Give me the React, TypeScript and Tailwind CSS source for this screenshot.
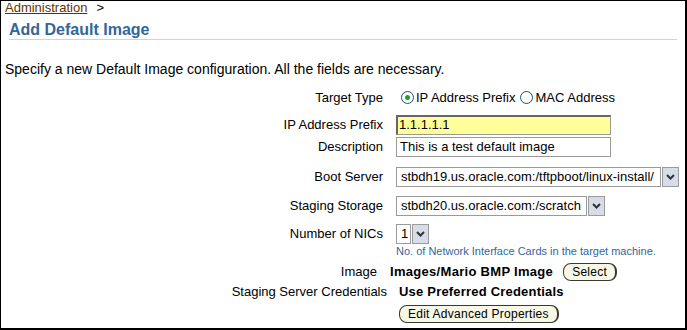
const font = { fontFamily: '"Liberation Sans", Arial, sans-serif' };

function Chevron() {
  return (
    <svg width="9" height="6" viewBox="0 0 9 6">
      <path d="M1 1 L4.5 4.5 L8 1" fill="none" stroke="#333" strokeWidth="2" />
    </svg>
  );
}

function Select({ value, width }: { value: string; width: string }) {
  return (
    <div className={`flex h-[20px] items-stretch ${width}`}>
      <div className="flex flex-1 items-center border border-[#9a9a9a] bg-white pl-[4px] text-[13px] text-black whitespace-nowrap overflow-hidden">
        {value}
      </div>
      <div className="ml-[1px] flex w-[17px] items-center justify-center border border-[#9a9a9a] bg-[#d8dbe8]">
        <Chevron />
      </div>
    </div>
  );
}

function Radio({ checked }: { checked?: boolean }) {
  return (
    <span className="inline-flex h-[13px] w-[13px] items-center justify-center rounded-full border border-[#1c5180] bg-white">
      {checked && <span className="h-[5px] w-[5px] rounded-full bg-[#21a121]" />}
    </span>
  );
}

function Button({ children }: { children: string }) {
  return (
    <button className="h-[18px] rounded-[8px] border border-[#3b3b2c] border-r-2 bg-[#f7f7e7] px-[8px] text-[12px] leading-[16px] tracking-[0.25px] text-black">
      {children}
    </button>
  );
}

export default function App() {
  return (
    <div
      className="h-[330px] w-[687px] overflow-hidden border-t border-l border-r-2 border-b-2 border-black bg-white text-black"
      style={font}
    >
      {/* breadcrumb */}
      <div className="pl-[4px] text-[13px] leading-[13px]">
        <a className="text-[#663300] underline">Administration</a>
        <span className="ml-[9px]">&gt;</span>
      </div>

      {/* title */}
      <div className="mx-[8px] mt-[6px] border-b border-[#d8d8a8] text-[16px] font-bold leading-[19px] text-[#336699]">
        Add Default Image
      </div>

      <p className="mt-[21px] pl-[4px] text-[14px] leading-[16px]">
        Specify a new Default Image configuration. All the fields are necessary.
      </p>

      {/* form */}
      <div className="mt-[11px] grid grid-cols-[382px_1fr] items-center gap-x-[13px] text-[13px]">
        <div className="text-right">Target Type</div>
        <div className="flex items-center gap-[2px] pl-[5px]">
          <Radio checked />
          <span className="mr-[3px]">IP Address Prefix</span>
          <Radio />
          <span>MAC Address</span>
        </div>

        <div className="mt-[7px] text-right">IP Address Prefix</div>
        <div className="mt-[7px]">
          <div className="flex h-[20px] w-[215px] items-center border border-[#9a9a9a] border-t-2 border-l-2 border-t-[#666] border-l-[#666] bg-[#ffff99] pl-[1px]">
            1.1.1.1.1
          </div>
        </div>

        <div className="mt-[2px] text-right">Description</div>
        <div className="mt-[2px]">
          <div className="flex h-[20px] w-[215px] items-center border border-[#9a9a9a] bg-white pl-[3px]">
            This is a test default image
          </div>
        </div>

        <div className="mt-[10px] text-right">Boot Server</div>
        <div className="mt-[10px]">
          <Select value="stbdh19.us.oracle.com:/tftpboot/linux-install/" width="w-[283px]" />
        </div>

        <div className="mt-[9px] text-right">Staging Storage</div>
        <div className="mt-[9px]">
          <Select value="stbdh20.us.oracle.com:/scratch" width="w-[209px]" />
        </div>

        <div className="mt-[8px] text-right">Number of NICs</div>
        <div className="mt-[8px]">
          <Select value="1" width="w-[33px]" />
        </div>

        <div />
        <div className="mt-[1px] text-[11px] leading-[12px] text-[#336699]">
          No. of Network Interface Cards in the target machine.
        </div>
      </div>

      <div className="mt-[5px] flex items-center text-[13px]">
        <div className="w-[376px] text-right">Image</div>
        <div className="ml-[13px] font-bold tracking-[0.3px]">Images/Mario BMP Image</div>
        <div className="ml-[10px]">
          <Button>Select</Button>
        </div>
      </div>
      <div className="mt-[3px] flex h-[15px] items-center text-[13px]">
        <div className="w-[386px] text-right">Staging Server Credentials</div>
        <div className="ml-[12px] font-bold tracking-[0.2px]">Use Preferred Credentials</div>
      </div>
      <div className="mt-[2px] pl-[398px]">
        <Button>Edit Advanced Properties</Button>
      </div>
    </div>
  );
}
